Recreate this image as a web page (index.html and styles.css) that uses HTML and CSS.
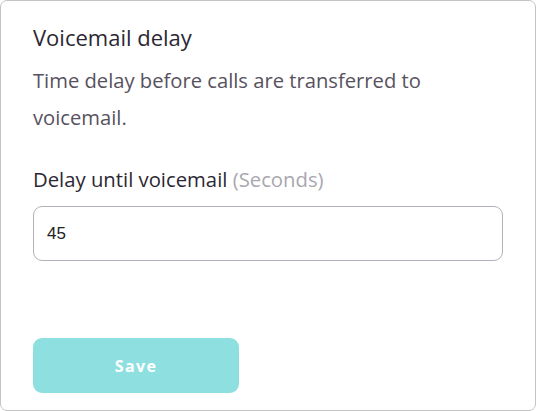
FILE: index.html
```html
<!DOCTYPE html>
<html>
<head>
<meta charset="utf-8">
<link rel="stylesheet" href="styles.css">
</head>
<body>
<div class="card">
  <h2 class="title">Voicemail delay</h2>
  <p class="desc">Time delay before calls are transferred to voicemail.</p>
  <label class="label">Delay until voicemail <span class="hint">(Seconds)</span></label>
  <div class="input">45</div>
  <button class="save">Save</button>
</div>
</body>
</html>
```

FILE: styles.css
```css
html, body { margin: 0; padding: 0; background: #fff; }
body { width: 536px; height: 411px; }
.card {
  box-sizing: border-box;
  width: 536px;
  height: 411px;
  border: 1px solid #c4c4c4;
  border-radius: 7px;
  padding: 22px 32px 0 32px;
  display: flex;
  flex-direction: column;
  align-items: flex-start;
  font-family: "Open Sans", sans-serif;
}
.title {
  margin: 0;
  font-size: 22px;
  font-weight: 500;
  line-height: 28px;
  color: #2b2833;
}
.desc {
  margin: 11px 0 0 0;
  width: 440px;
  font-size: 20.2px;
  line-height: 37px;
  color: #57525e;
}
.label {
  margin-top: 30px;
  font-size: 20.3px;
  line-height: 26px;
  color: #2b2833;
}
.hint { color: #a9a7af; }
.input {
  box-sizing: border-box;
  margin-top: 14px;
  width: 470px;
  height: 55px;
  border: 1px solid #b3b1b9;
  border-radius: 9px;
  padding: 0 13px;
  display: flex;
  align-items: center;
  font-family: "Liberation Sans", Arial, sans-serif;
  font-size: 17px;
  color: #222;
}
.save {
  margin-top: 77px;
  width: 206px;
  height: 55px;
  border: none;
  border-radius: 9px;
  background: #8edfdf;
  color: #fff;
  font-family: "Open Sans", sans-serif;
  font-weight: 700;
  font-size: 16px;
  letter-spacing: 1.4px;
}
```
